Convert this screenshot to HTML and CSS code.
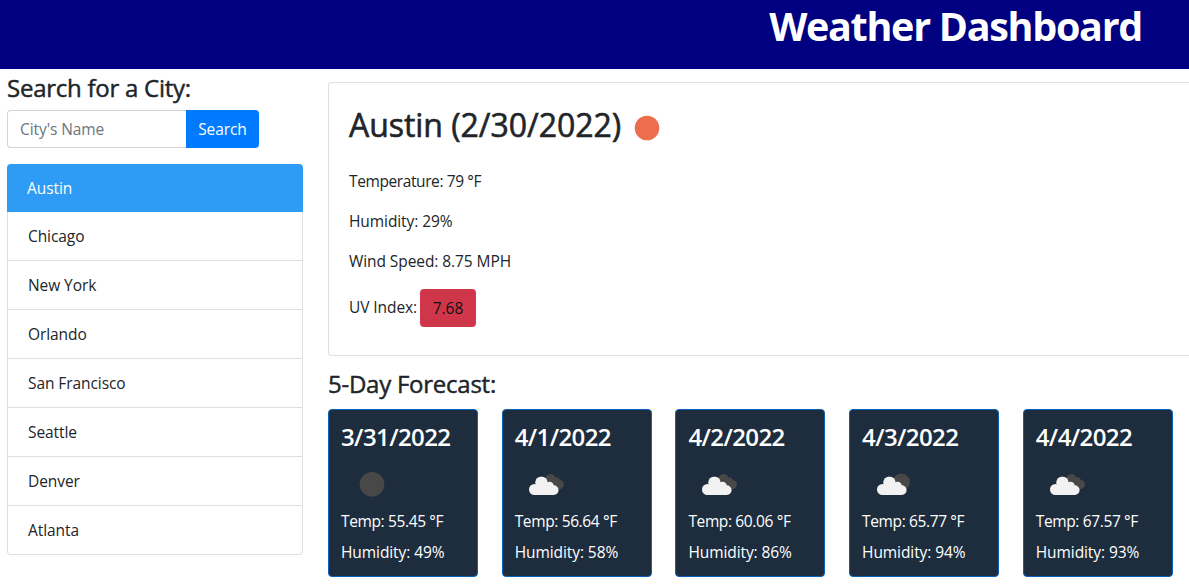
FILE: index.html
```html
<!DOCTYPE html>
<html lang="en">
<head>
<meta charset="utf-8">
<title>Weather Dashboard</title>
<link rel="stylesheet" href="styles.css">
</head>
<body>
<svg class="defs" width="0" height="0" aria-hidden="true">
  <symbol id="cloud" viewBox="0 0 30 19">
    <circle cx="12.4" cy="6.3" r="6.2"/><circle cx="5.5" cy="13.2" r="5.5"/>
    <circle cx="20.6" cy="9.6" r="4.2"/><circle cx="24.7" cy="13.8" r="4.9"/>
    <path d="M5.5 9H20L24.7 12V18.7H5.5Z"/>
  </symbol>
  <symbol id="rear" viewBox="0 0 50 50">
    <circle cx="35.5" cy="22.2" r="5.3"/><circle cx="41.2" cy="23.8" r="3.6"/><circle cx="44.3" cy="27.6" r="4.6"/>
    <path d="M33 22H42L44 32H34Z"/>
  </symbol>
</svg>
<header class="header"><h1 class="title">Weather Dashboard</h1></header>
<main class="layout">
  <aside class="sidebar">
    <h4 class="heading heading-search">Search for a City:</h4>
    <form class="search">
      <input class="search-input" type="text" placeholder="City's Name">
      <button class="search-button" type="button">Search</button>
    </form>
    <ul class="cities">
      <li class="city active">Austin</li>
      <li class="city">Chicago</li>
      <li class="city">New York</li>
      <li class="city">Orlando</li>
      <li class="city">San Francisco</li>
      <li class="city">Seattle</li>
      <li class="city">Denver</li>
      <li class="city">Atlanta</li>
    </ul>
  </aside>
  <section class="content">
    <article class="current">
      <h2 class="current-title"><span>Austin (2/30/2022)</span>
        <svg class="sun" viewBox="0 0 26 26"><circle cx="13" cy="13" r="12.3" fill="#ec6e4c"/></svg>
      </h2>
      <p class="stat temperature">Temperature: 79 °F</p>
      <p class="stat">Humidity: 29%</p>
      <p class="stat">Wind Speed: 8.75 MPH</p>
      <p class="stat uv"><span>UV Index:</span><span class="badge">7.68</span></p>
    </article>
    <h4 class="heading heading-forecast">5-Day Forecast:</h4>
    <div class="forecast">
      <article class="day">
        <h4 class="date">3/31/2022</h4>
        <svg class="icon" viewBox="0 0 50 50"><circle cx="31" cy="27.3" r="12.3" fill="#484848"/></svg>
        <p class="line temp">Temp: 55.45 °F</p><p class="line">Humidity: 49%</p>
      </article>
      <article class="day">
        <h4 class="date">4/1/2022</h4>
        <svg class="icon" viewBox="0 0 50 50"><use href="#rear" width="50" height="50" class="rear"/><use href="#cloud" x="14" y="19.3" width="30" height="19" class="front"/></svg>
        <p class="line temp">Temp: 56.64 °F</p><p class="line">Humidity: 58%</p>
      </article>
      <article class="day">
        <h4 class="date">4/2/2022</h4>
        <svg class="icon" viewBox="0 0 50 50"><use href="#rear" width="50" height="50" class="rear"/><use href="#cloud" x="14" y="19.3" width="30" height="19" class="front"/></svg>
        <p class="line temp">Temp: 60.06 °F</p><p class="line">Humidity: 86%</p>
      </article>
      <article class="day">
        <h4 class="date">4/3/2022</h4>
        <svg class="icon" viewBox="0 0 50 50"><circle cx="39.3" cy="25" r="8.6" fill="#484848"/><use href="#cloud" x="15" y="19.3" width="30" height="19" class="front"/></svg>
        <p class="line temp">Temp: 65.77 °F</p><p class="line">Humidity: 94%</p>
      </article>
      <article class="day">
        <h4 class="date">4/4/2022</h4>
        <svg class="icon" viewBox="0 0 50 50"><use href="#rear" width="50" height="50" class="rear"/><use href="#cloud" x="14" y="19.3" width="30" height="19" class="front"/></svg>
        <p class="line temp">Temp: 67.57 °F</p><p class="line">Humidity: 93%</p>
      </article>
    </div>
  </section>
</main>
</body>
</html>
```

FILE: styles.css
```css
* { box-sizing: border-box; }
body {
  margin: 0;
  height: 588px;
  overflow: hidden;
  background: #fff;
  color: #212529;
  font: 400 15.5px/24px "Open Sans", "Noto Sans", sans-serif;
  letter-spacing: -0.08px;
}
h1, h2, h4, p, ul { margin: 0; padding: 0; }
.defs { display: block; }
.header { height: 69px; background: #000080; padding: 2px 47px 0 0; }
.title { color: #fff; font-size: 39.5px; line-height: 48px; font-weight: 700; text-align: right; letter-spacing: -1.3px; }
.layout { display: flex; gap: 25px; padding-left: 7px; }
.sidebar { flex: 0 0 296px; padding-top: 5px; }
.heading {
  font-size: 24px;
  line-height: 28px;
  font-weight: 400;
  letter-spacing: -0.25px;
  white-space: nowrap;
  -webkit-text-stroke: 0.45px currentColor;
}
.search { display: flex; width: 252px; height: 38px; margin-top: 8px; }
.search-input {
  flex: 1;
  min-width: 0;
  padding: 6px 12px;
  border: 1px solid #ced4da;
  border-right: 0;
  border-radius: 4px 0 0 4px;
  font: inherit;
  letter-spacing: inherit;
}
.search-input::placeholder { color: #6c757d; opacity: 1; }
.search-button {
  width: 73px;
  padding: 0;
  border: 0;
  border-radius: 0 4px 4px 0;
  background: #007bff;
  color: #fff;
  font: inherit;
  letter-spacing: inherit;
}
.cities { list-style: none; margin-top: 16px; }
.city { padding: 12px 20px; border: 1px solid #dfdfdf; border-top: 0; }
.city.active { border: 0; background: #2e9bf4; color: #fff; border-radius: 4px 4px 0 0; }
.city:last-child { border-radius: 0 0 4px 4px; }
.content { flex: 1; min-width: 0; padding-top: 13px; }
.current { height: 274px; padding: 23px 20px; border: 1px solid #dfdfdf; border-right: 0; border-radius: 4px 0 0 4px; }
.current-title {
  display: flex;
  align-items: center;
  gap: 13px;
  height: 38px;
  font-size: 32px;
  font-weight: 400;
  letter-spacing: -0.05px;
  white-space: nowrap;
  -webkit-text-stroke: 0.6px currentColor;
}
.sun { width: 26px; height: 26px; margin-top: 6px; -webkit-text-stroke: 0; }
.stat { margin-top: 16px; }
.temperature { margin-top: 25px; letter-spacing: -0.4px; }
.stat.uv { display: flex; margin-top: 16px; line-height: 36px; }
.uv span:first-child { width: 71px; }
.badge { width: 56px; height: 38px; border-radius: 4px; background: #d0364a; color: #111; line-height: 38px; text-align: center; }
.heading-forecast { margin-top: 14px; }
.forecast { display: grid; grid-template-columns: repeat(5, 150px); column-gap: 23.7px; margin-top: 11px; }
.day { height: 168px; padding: 12px 12px; border: 1px solid #0a62bd; border-radius: 4px; background: #1d2d3e; color: #fff; }
.date { font-size: 24px; line-height: 29px; font-weight: 600; letter-spacing: -0.6px; white-space: nowrap; }
.icon { display: block; width: 50px; height: 50px; margin-top: 6px; }
.rear { fill: #484848; }
.front { fill: #f2f2f2; }
.line { margin-top: 7px; white-space: nowrap; }
.temp { margin-top: 2px; letter-spacing: -0.37px; }
```
